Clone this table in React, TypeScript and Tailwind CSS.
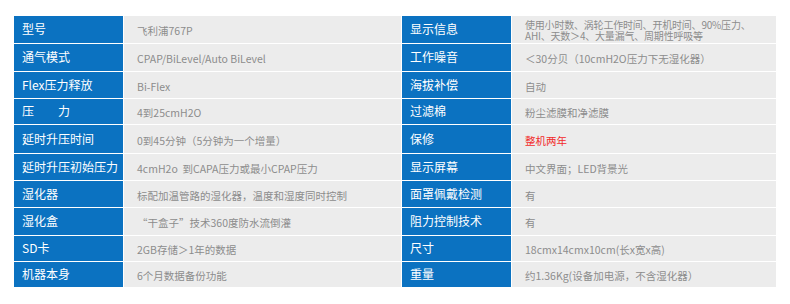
import React from 'react';

type Spec = { label: string; value: React.ReactNode; red?: boolean };

const rows: [Spec, Spec][] = [
  [
    { label: '型号', value: '飞利浦767P' },
    {
      label: '显示信息',
      value: (
        <span className="block -mt-[3px] text-[10px] leading-[11px] tracking-[-0.2px]">
          使用小时数、涡轮工作时间、开机时间、90%压力、
          <br />
          AHI、天数＞4、大量漏气、周期性呼吸等
        </span>
      ),
    },
  ],
  [
    { label: '通气模式', value: 'CPAP/BiLevel/Auto BiLevel' },
    { label: '工作噪音', value: '＜30分贝（10cmH2O压力下无湿化器）' },
  ],
  [
    { label: 'Flex压力释放', value: 'Bi-Flex' },
    { label: '海拔补偿', value: '自动' },
  ],
  [
    { label: '压　　力', value: '4到25cmH2O' },
    { label: '过滤棉', value: '粉尘滤膜和净滤膜' },
  ],
  [
    { label: '延时升压时间', value: '0到45分钟（5分钟为一个增量）' },
    { label: '保修', value: '整机两年', red: true },
  ],
  [
    { label: '延时升压初始压力', value: '4cmH2o  到CAPA压力或最小CPAP压力' },
    { label: '显示屏幕', value: '中文界面；LED背景光' },
  ],
  [
    { label: '湿化器', value: '标配加温管路的湿化器，温度和湿度同时控制' },
    { label: '面罩佩戴检测', value: '有' },
  ],
  [
    { label: '湿化盒', value: '“干盒子”技术360度防水流倒灌' },
    { label: '阻力控制技术', value: '有' },
  ],
  [
    { label: 'SD卡', value: '2GB存储＞1年的数据' },
    { label: '尺寸', value: '18cmx14cmx10cm(长x宽x高)' },
  ],
  [
    { label: '机器本身', value: '6个月数据备份功能' },
    { label: '重量', value: '约1.36Kg(设备加电源，不含湿化器）' },
  ],
];

const Label = ({ text }: { text: string }) => (
  <div className="flex items-center bg-[#0b72c1] pl-2 pb-px text-[12px] text-white whitespace-pre">
    {text}
  </div>
);

const Value = ({ spec }: { spec: Spec }) => (
  <div
    className={
      'flex items-center bg-[#ececec] pl-[13px] pt-[3px] text-[10.5px] whitespace-pre ' +
      (spec.red ? 'text-[#f22a2a]' : 'text-[#8c8c8c]')
    }
  >
    {spec.value}
  </div>
);

export default function App() {
  return (
    <div
      lang="zh-CN"
      className="w-[790px] h-[304px] bg-white pt-4 pl-[14px]"
      style={{ fontFamily: '"Noto Sans CJK SC", "Noto Sans", sans-serif' }}
    >
      <div className="grid grid-cols-[109px_277px_109px_264px] grid-rows-[27px_27px_26px_25px_28px_26px_26px_27px_25px_25px] gap-x-px gap-y-px">
        {rows.map(([l, r], i) => (
          <React.Fragment key={i}>
            <Label text={l.label} />
            <Value spec={l} />
            <Label text={r.label} />
            <Value spec={r} />
          </React.Fragment>
        ))}
      </div>
    </div>
  );
}
